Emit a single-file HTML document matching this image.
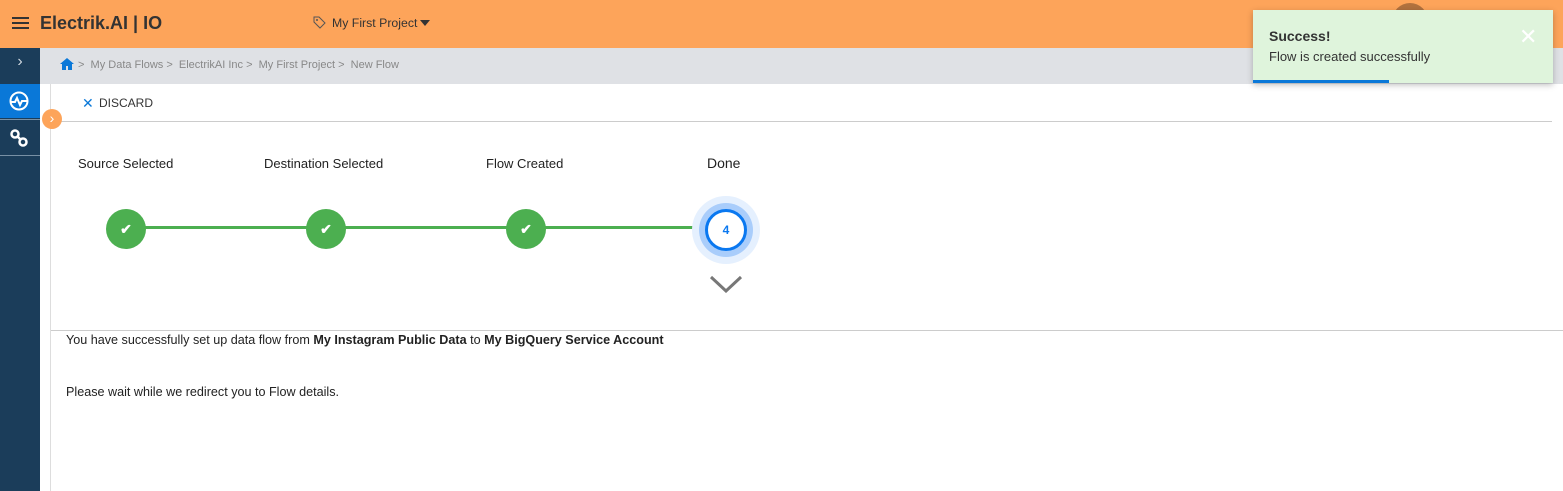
<!DOCTYPE html>
<html><head><meta charset="utf-8"><style>
*{box-sizing:border-box;margin:0;padding:0}
body{width:1563px;height:491px;overflow:hidden;background:#fff;font-family:"Liberation Sans",sans-serif;color:#222;position:relative}
.top{position:absolute;left:0;top:0;width:1563px;height:48px;background:#fda45a}
.side{position:absolute;left:0;top:48px;width:40px;height:443px;background:#1b3d5a}
.bc{position:absolute;left:40px;top:48px;width:1523px;height:36px;background:#dfe1e5;font-size:11px;color:#888}
.abs{position:absolute}
</style></head><body>
<div class="top">
 <div class="abs" style="left:12px;top:17px;width:17px;height:2px;background:#333;box-shadow:0 5px 0 #333,0 10px 0 #333"></div>
 <div class="abs" style="left:40px;top:13px;font-size:18px;font-weight:bold;color:#333">Electrik.AI | IO</div>
 <svg class="abs" style="left:313px;top:16px" width="13" height="13" viewBox="0 0 13 13"><path d="M1 1h5l6 6-5 5-6-6z" fill="none" stroke="#555" stroke-width="1"/><circle cx="4" cy="4" r="1" fill="#555"/></svg>
 <div class="abs" style="left:332px;top:16px;font-size:12.3px;color:#333">My First Project</div>
 <div class="abs" style="left:420px;top:20px;border-left:5px solid transparent;border-right:5px solid transparent;border-top:6px solid #333"></div>
 <div class="abs" style="left:1392px;top:3px;width:36px;height:36px;border-radius:50%;background:#b0713e"></div>
</div>
<div class="side">
 <div class="abs" style="left:0;top:0;width:40px;height:34px;color:#cfd8e0;font-size:16px;text-align:center;line-height:28px">&#x203A;</div>
 <div class="abs" style="left:0;top:36px;width:40px;height:34px;background:#0a78d8"></div>
 <svg class="abs" style="left:8px;top:42px" width="22" height="22" viewBox="0 0 22 22"><circle cx="11" cy="11" r="8.5" fill="none" stroke="#fff" stroke-width="2"/><path d="M2 12h5l2-4 3 7 2-4h6" fill="none" stroke="#fff" stroke-width="2"/></svg>
 <div class="abs" style="left:0;top:71px;width:40px;height:1px;background:#7890a5"></div>
 <svg class="abs" style="left:9px;top:80px" width="20" height="20" viewBox="0 0 20 20"><circle cx="6" cy="6" r="3.5" fill="none" stroke="#fff" stroke-width="2.5"/><circle cx="14" cy="14" r="3.5" fill="none" stroke="#fff" stroke-width="2.5"/><path d="M8 8l4 4" stroke="#fff" stroke-width="2.5"/></svg>
 <div class="abs" style="left:0;top:107px;width:40px;height:1px;background:#7890a5"></div>
</div>
<div class="bc">
 <svg class="abs" style="left:20px;top:10px" width="14" height="12" viewBox="0 0 14 12"><path d="M7 0L0 6h2v6h4V8h2v4h4V6h2z" fill="#0a78d8"/></svg>
 <div class="abs" style="left:38px;top:11px;white-space:nowrap">&gt; &nbsp;My Data Flows &gt; &nbsp;ElectrikAI Inc &gt; &nbsp;My First Project &gt; &nbsp;New Flow</div>
</div>
<div class="abs" style="left:50px;top:84px;width:1px;height:407px;background:#ddd"></div>
<div class="abs" style="left:82px;top:95px;font-size:14px;color:#0a78d8">&#x2715;</div>
<div class="abs" style="left:99px;top:96px;font-size:12px;color:#333">DISCARD</div>
<div class="abs" style="left:51px;top:121px;width:1501px;height:1px;background:#ccc"></div>
<div class="abs" style="left:42px;top:109px;width:20px;height:20px;border-radius:50%;background:#fda45a;color:#fff;font-size:14px;text-align:center;line-height:18px">&#x203A;</div>
<div class="abs" style="left:78px;top:156px;font-size:13px">Source Selected</div>
<div class="abs" style="left:264px;top:156px;font-size:13px">Destination Selected</div>
<div class="abs" style="left:486px;top:156px;font-size:13px">Flow Created</div>
<div class="abs" style="left:707px;top:155px;font-size:14px">Done</div>
<div class="abs" style="left:126px;top:226px;width:600px;height:3px;background:#4caf50"></div>
<div class="abs" style="left:106px;top:209px;width:40px;height:40px;border-radius:50%;background:#4caf50;color:#fff;text-align:center;line-height:40px;font-size:14px;font-weight:bold">&#x2714;</div>
<div class="abs" style="left:306px;top:209px;width:40px;height:40px;border-radius:50%;background:#4caf50;color:#fff;text-align:center;line-height:40px;font-size:14px;font-weight:bold">&#x2714;</div>
<div class="abs" style="left:506px;top:209px;width:40px;height:40px;border-radius:50%;background:#4caf50;color:#fff;text-align:center;line-height:40px;font-size:14px;font-weight:bold">&#x2714;</div>
<div class="abs" style="left:692px;top:196px;width:68px;height:68px;border-radius:50%;background:#e5f0fe"></div>
<div class="abs" style="left:699px;top:203px;width:54px;height:54px;border-radius:50%;background:#a9cdfb"></div>
<div class="abs" style="left:705px;top:209px;width:42px;height:42px;border-radius:50%;background:#fff;border:3px solid #0a78f0;color:#0a78f0;text-align:center;line-height:36px;font-size:12px;font-weight:bold">4</div>
<svg class="abs" style="left:709px;top:275px" width="34" height="18" viewBox="0 0 34 18"><path d="M2 2l15 14 15-14" fill="none" stroke="#777" stroke-width="3"/></svg>
<div class="abs" style="left:51px;top:330px;width:1512px;height:1px;background:#ccc"></div>
<div class="abs" style="left:66px;top:333px;font-size:12.6px">You have successfully set up data flow from <b>My Instagram Public Data</b> to <b>My BigQuery Service Account</b></div>
<div class="abs" style="left:66px;top:385px;font-size:12.6px">Please wait while we redirect you to Flow details.</div>
<div class="abs" style="left:1253px;top:10px;width:300px;height:73px;background:#dff4dc;box-shadow:0 2px 6px rgba(0,0,0,.25)">
 <div class="abs" style="left:16px;top:18px;font-size:14px;font-weight:bold;color:#333">Success!</div>
 <div class="abs" style="left:16px;top:39px;font-size:13px;color:#333">Flow is created successfully</div>
 <div class="abs" style="left:266px;top:14px;font-size:22px;color:#fff">&#x2715;</div>
 <div class="abs" style="left:0;top:70px;width:136px;height:3px;background:#0a78d8"></div>
</div>
</body></html>
